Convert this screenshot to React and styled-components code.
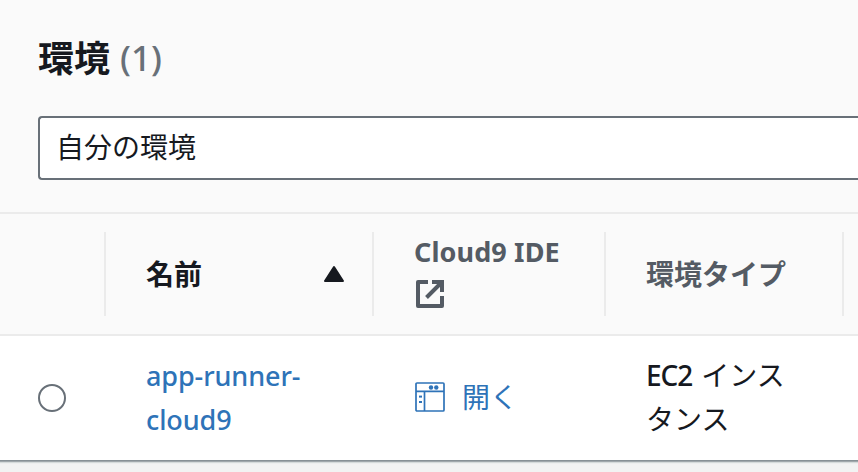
import React from "react";
import styled, { createGlobalStyle } from "styled-components";

const GlobalStyle = createGlobalStyle`
  * { box-sizing: border-box; }
  body {
    margin: 0;
    overflow: hidden;
    background: #f2f3f3;
    color: #16191f;
    font-family: "Noto Sans", "Noto Sans CJK JP", sans-serif;
    font-size: 28px;
    line-height: 44px;
  }
`;

const Page = styled.main`
  width: 858px;
  height: 472px;
  overflow: hidden;
`;

const Panel = styled.section`
  height: 460px;
  background: #fff;
  box-shadow: 0 1px 0 #879196, 0 2px 0 #a0a8ac, 0 3px 1px #d5dbdb;
`;

const PanelHeader = styled.header`
  height: 214px;
  padding: 34px 0 0 38px;
  background: #fafafa;
  border-bottom: 2px solid #ebebeb;
`;

const Title = styled.h2`
  display: flex;
  align-items: center;
  gap: 10px;
  height: 44px;
  margin: 0 0 38px;
  font-family: "Noto Sans CJK JP", sans-serif;
  font-size: 36px;
  font-weight: 700;
`;

const Count = styled.span`
  padding-top: 4px;
  color: #687078;
  font-family: "Noto Sans", sans-serif;
  font-size: 35px;
  font-weight: 500;
  letter-spacing: 0;
`;

const Filter = styled.div`
  display: flex;
  align-items: center;
  height: 64px;
  padding: 0 0 2px 16px;
  border: 2px solid #687078;
  border-right: 0;
  border-radius: 4px 0 0 4px;
  background: #fff;
`;

const Row = styled.div`
  display: grid;
  grid-template-columns: 106px 268px 232px 238px 14px;
  align-items: center;
`;

const HeadRow = styled(Row)`
  height: 122px;
  background: #fafafa;
  border-bottom: 2px solid #ebebeb;
`;

const BodyRow = styled(Row)`
  height: 124px;
`;

const HeadCell = styled.div`
  display: flex;
  align-items: center;
  justify-content: space-between;
  height: 84px;
  padding: 0 27px 0 40px;
  border-right: 2px solid #ebebeb;
  color: ${({ $active }) => ($active ? "#16191f" : "#545b64")};
  font-weight: 700;
  white-space: nowrap;
`;

const Stack = styled.div`
  display: flex;
  flex-direction: column;
  align-items: flex-start;
  gap: 6px;
  padding-bottom: 10px;

  svg { margin-left: 2px; }
`;

const Label = styled.span`
  height: 44px;
  letter-spacing: ${({ $spacing = 0 }) => $spacing}px;
  font-size: ${({ $size = 28 }) => $size}px;
`;

const Cell = styled.div`
  display: flex;
  align-items: center;
  gap: 17px;
  padding-left: 40px;

  svg { margin: 0 0 2px 1px; }
`;

const Link = styled.a`
  color: #2e73b8;
  font-weight: ${({ $weight = 400 }) => $weight};
  letter-spacing: ${({ $spacing = 0 }) => $spacing}px;
  font-size: ${({ $size = 28 }) => $size}px;
  padding-bottom: ${({ $lift = 0 }) => $lift}px;
`;

const Text = styled.div`
  padding-bottom: 2px;
`;

const Latin = styled.span`
  margin-right: 2px;
  font-weight: 500;
  letter-spacing: -1.1px;
`;

const Radio = styled.span`
  width: 28px;
  height: 28px;
  margin-left: 38px;
  border: 2px solid #687078;
  border-radius: 50%;
`;

const Icon = styled.svg`
  display: block;
  flex: none;
`;

const SortIcon = () => (
  <Icon width="22" height="18" viewBox="0 0 22 18">
    <path d="M11 2 20 16H2Z" fill="#16191f" stroke="#16191f" strokeWidth="2" strokeLinejoin="round" />
  </Icon>
);

const ExternalIcon = () => (
  <Icon width="28" height="28" viewBox="0 0 28 28">
    <g fill="none" stroke="#545b64" strokeWidth="4">
      <path d="M12 2H2V26H26V16" strokeLinejoin="round" />
      <path d="M16 2H26V12M25 3 10.5 17.5" />
    </g>
  </Icon>
);

const IdeIcon = () => (
  <Icon width="30" height="30" viewBox="0 0 30 30">
    <g fill="none" stroke="#2e73b8" strokeWidth="1.7">
      <rect x="1" y="1" width="28" height="28" rx="1" />
      <path d="M1 9.4H29M9.5 9.4V29" />
    </g>
    <g fill="#2e73b8">
      <circle cx="16" cy="5.5" r="2.2" />
      <circle cx="21.3" cy="5.5" r="2.2" />
      <rect x="4" y="13.6" width="3" height="2" />
      <rect x="4" y="19" width="3" height="2" />
    </g>
  </Icon>
);

export default function App() {
  return (
    <Page>
      <GlobalStyle />
      <Panel>
        <PanelHeader>
          <Title>環境 <Count>(1)</Count></Title>
          <Filter>自分の環境</Filter>
        </PanelHeader>
        <HeadRow>
          <HeadCell />
          <HeadCell $active>
            <Label>名前</Label>
            <SortIcon />
          </HeadCell>
          <HeadCell>
            <Stack>
              <Label $size={27} $spacing={0.1}>Cloud9 IDE</Label>
              <ExternalIcon />
            </Stack>
          </HeadCell>
          <HeadCell><Label>環境タイプ</Label></HeadCell>
        </HeadRow>
        <BodyRow>
          <Radio />
          <Cell><Link $size={27} $weight={500} $spacing={-0.1}>app-runner-<br />cloud9</Link></Cell>
          <Cell>
            <IdeIcon />
            <Link $lift={2}>開く</Link>
          </Cell>
          <Cell><Text><Latin>EC2</Latin> インス<br />タンス</Text></Cell>
        </BodyRow>
      </Panel>
    </Page>
  );
}
